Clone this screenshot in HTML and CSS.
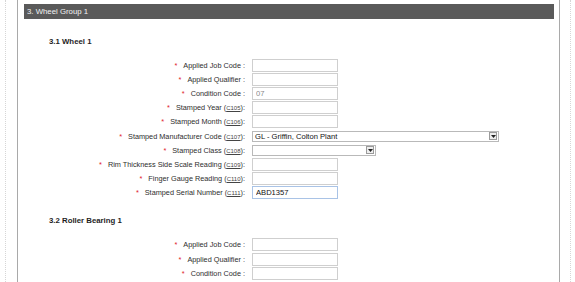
FILE: index.html
```html
<!DOCTYPE html>
<html lang="en">

<head>
    <meta charset="UTF-8">
    <meta name="viewport" content="width=device-width, initial-scale=1.0">
    <title>Wheel Group</title>

    <link rel="stylesheet" href="styles.css">
</head>

<body>
    <div class="page">
        <div class="panel">
            <div class="bar">3. Wheel Group 1</div>

            <h3 class="section-title">3.1 Wheel 1</h3>
            <div class="fields">
                <div class="field">
                    <label class="field__label"><span class="req">*</span>Applied Job Code :</label>
                    <input class="field__input" type="text">
                </div>
                <div class="field">
                    <label class="field__label"><span class="req">*</span>Applied Qualifier :</label>
                    <input class="field__input" type="text">
                </div>
                <div class="field">
                    <label class="field__label"><span class="req">*</span>Condition Code :</label>
                    <input class="field__input field__input--muted" type="text" value="07">
                </div>
                <div class="field">
                    <label class="field__label"><span class="req">*</span>Stamped Year (<a class="code">C105</a>):</label>
                    <input class="field__input" type="text">
                </div>
                <div class="field">
                    <label class="field__label"><span class="req">*</span>Stamped Month (<a class="code">C106</a>):</label>
                    <input class="field__input" type="text">
                </div>
                <div class="field">
                    <label class="field__label"><span class="req">*</span>Stamped Manufacturer Code (<a class="code">C107</a>):</label>
                    <div class="select select--wide">
                        <span class="select__value">GL - Griffin, Colton Plant</span>
                        <span class="select__button">
                            <svg width="5" height="3" viewBox="0 0 5 3"><path d="M0 0h5L2.5 3z" fill="#222"/></svg>
                        </span>
                    </div>
                </div>
                <div class="field">
                    <label class="field__label"><span class="req">*</span>Stamped Class (<a class="code">C108</a>):</label>
                    <div class="select select--short">
                        <span class="select__value"></span>
                        <span class="select__button">
                            <svg width="5" height="3" viewBox="0 0 5 3"><path d="M0 0h5L2.5 3z" fill="#222"/></svg>
                        </span>
                    </div>
                </div>
                <div class="field">
                    <label class="field__label"><span class="req">*</span>Rim Thickness Side Scale Reading (<a class="code">C109</a>):</label>
                    <input class="field__input" type="text">
                </div>
                <div class="field">
                    <label class="field__label"><span class="req">*</span>Finger Gauge Reading (<a class="code">C110</a>):</label>
                    <input class="field__input" type="text">
                </div>
                <div class="field">
                    <label class="field__label"><span class="req">*</span>Stamped Serial Number (<a class="code">C111</a>):</label>
                    <input class="field__input field__input--focus" type="text" value="ABD1357">
                </div>
            </div>

            <h3 class="section-title section-title--second">3.2 Roller Bearing 1</h3>
            <div class="fields">
                <div class="field">
                    <label class="field__label"><span class="req">*</span>Applied Job Code :</label>
                    <input class="field__input" type="text">
                </div>
                <div class="field">
                    <label class="field__label"><span class="req">*</span>Applied Qualifier :</label>
                    <input class="field__input" type="text">
                </div>
                <div class="field">
                    <label class="field__label"><span class="req">*</span>Condition Code :</label>
                    <input class="field__input" type="text">
                </div>
            </div>
        </div>
    </div>
</body>

</html>
```

FILE: styles.css
```css
html,
body {
    margin: 0;
    height: 100%;
    overflow: hidden;
    background-color: #fff;
    font-family: "Liberation Sans", Arial, sans-serif;
    color: #333;
}

.page {
    margin-left: 5px;
    width: 564px;
    min-height: 100%;
    border-left: 1px dotted #d6d6d6;
    border-right: 1px dotted #d6d6d6;
}

.panel {
    margin-left: 11px;
    width: 530px;
    min-height: 100vh;
    padding: 4px 5px 0 6px;
    border-left: 1px solid #a9a9a9;
    border-right: 1px solid #a9a9a9;
}

.bar {
    height: 15px;
    line-height: 15px;
    padding-left: 3px;
    background-color: #5a5a5a;
    color: #f2f2f2;
    font-size: 7.8px;
}

.section-title {
    margin: 17px 0 0 25px;
    height: 11px;
    line-height: 11px;
    font-size: 7.8px;
    font-weight: bold;
    color: #1e1e1e;
}

.section-title--second {
    margin-top: 15px;
}

.fields {
    margin-top: 11px;
}

.section-title--second + .fields {
    margin-top: 12px;
}

.field {
    display: flex;
    align-items: center;
    height: 14.2px;
}

.field__label {
    width: 221px;
    margin-right: 7px;
    text-align: right;
    font-size: 7.3px;
    white-space: nowrap;
    color: #2e2e2e;
}

.req {
    color: #e0202a;
    margin-right: 6px;
}

.code {
    font-size: 6px;
    text-decoration: underline;
    color: #444;
}

.field__input {
    box-sizing: border-box;
    width: 86px;
    height: 13px;
    margin: 0;
    padding: 0 3px;
    border: 1px solid #cfcfcf;
    font-family: "Liberation Sans", Arial, sans-serif;
    font-size: 7.6px;
    color: #111;
    outline: none;
}

.field__input--muted {
    color: #888;
}

.field__input--focus {
    border-color: #a9c3e6;
}

.select {
    box-sizing: border-box;
    display: flex;
    align-items: center;
    height: 11px;
    border: 1px solid #b9b9b9;
    padding-left: 2px;
}

.select--wide {
    width: 247px;
}

.select--short {
    width: 124px;
}

.select__value {
    flex: 1;
    font-size: 7.6px;
    color: #111;
    white-space: nowrap;
}

.select__button {
    box-sizing: border-box;
    display: flex;
    align-items: center;
    justify-content: center;
    width: 8px;
    height: 8px;
    margin-right: 1px;
    border: 1px solid #9a9a9a;
    background-color: #eee;
}
```
